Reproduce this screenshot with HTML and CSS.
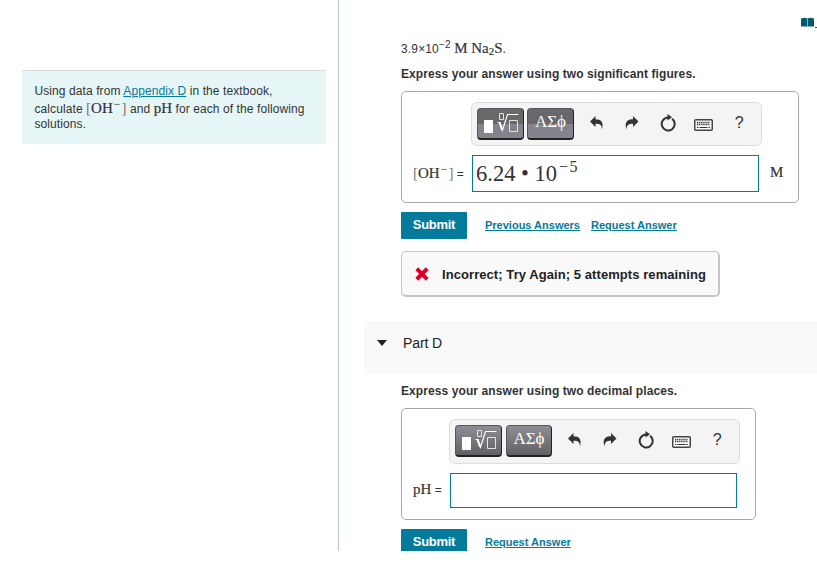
FILE: index.html
```
<!DOCTYPE html>
<html lang="en">
<head>
  <meta charset="UTF-8">
  <title>Part D</title>
  <link rel="stylesheet" href="styles.css">
</head>
<body>
  <!-- shared icons -->
  <svg class="defs">
    <symbol id="template" viewBox="0 0 47 32">
      <path d="M7 12h9v13H7z" fill="#fff"/>
      <path d="M22.500 5.500h4v6h-4zM32.500 12.500h8v11h-8z" fill="none" stroke="#e4e4e6"/>
      <path d="M20.500 14.500h2.500l2.500 7.500 5-15.500h11" fill="none" stroke="#fff" stroke-width="1.200"/>
      <path d="M22.500 14.500l2.500 7.500" stroke="#fff" stroke-width="1.800"/>
    </symbol>
    <symbol id="undo" viewBox="0 0 14 14">
      <path d="M0 5.500L5.500 0v3.200C11 3.200 14 6 12 13.500C12 9 10 7.800 5.500 7.800V11z"/>
    </symbol>
    <symbol id="redo" viewBox="0 0 14 14">
      <path d="M13.500 5.500L8 0v3.200C2.500 3.200-1 6 1.500 13.500C1.500 9 3.500 7.800 8 7.800V11z"/>
    </symbol>
    <symbol id="reset" viewBox="0 0 16 18">
      <path d="M12 4.700A6.500 6.500 0 1 1 8 3.500" fill="none" stroke="#333" stroke-width="2"/>
      <path d="M7.500 0l4.500 3.200L7.500 6.500z"/>
    </symbol>
    <symbol id="keyboard" viewBox="0 0 19 12">
      <rect x=".75" y=".75" width="17.500" height="10.500" rx="1" fill="#fff" stroke="#444" stroke-width="1.500"/>
      <path d="M3 3.500h13M3 5.500h13" fill="none" stroke="#333" stroke-width="1.300" stroke-dasharray="1.300 .8"/>
      <path d="M3 8.500h1.500M5.500 8.500h8M14.500 8.500H16" stroke="#333" stroke-width="1.200"/>
    </symbol>
  </svg>

  <div class="page">
    <div class="sidebar">
      <div class="intro">
        <div class="line l1">Using data from <a href="#">Appendix D</a> in the textbook,</div>
        <div class="line l2">calculate <span class="math"><span class="br">[</span>OH<sup>−</sup><span class="br">]</span></span> and <span class="math">pH</span> for each of the following</div>
        <div class="line">solutions.</div>
      </div>
    </div>

    <div class="main">
      <svg class="book" viewBox="0 0 16 11">
        <path d="M0 1.500C3 .5 5 .5 6 1.500V9.500H0zM7 1.500C8 .5 10 .5 13 1.500V9.500H7z"/>
        <path d="M6 1h1v9H6z" fill="#7fb4c2"/>
        <path d="M14 10h2v1h-2z"/>
      </svg>

      <div class="part">
        <div class="question">3.9×10<sup>−2</sup> <span class="math">M Na<sub>2</sub>S</span>.</div>
        <div class="instruction first">Express your answer using two significant figures.</div>

        <div class="answer answer-c">
          <div class="toolbar">
            <button class="tool split"><svg><use href="#template"/></svg></button>
            <button class="tool greek split">ΑΣϕ</button>
            <div class="icons">
              <span><svg width="14" height="14"><use href="#undo"/></svg></span>
              <span><svg width="14" height="14"><use href="#redo"/></svg></span>
              <span><svg width="16" height="18"><use href="#reset"/></svg></span>
              <span class="kb"><svg width="19" height="12"><use href="#keyboard"/></svg></span>
              <span class="help">?</span>
            </div>
          </div>
          <div class="row">
            <div class="label"><span class="math"><span class="br">[</span>OH<sup>−</sup><span class="br">]</span></span> =</div>
            <div class="field">6.24 • 10<sup>−5</sup></div>
            <div class="unit">M</div>
          </div>
        </div>

        <div class="actions">
          <button class="submit">Submit</button>
          <a class="prev" href="#">Previous Answers</a>
          <a href="#">Request Answer</a>
        </div>

        <div class="feedback">
          <svg width="14" height="14" viewBox="0 0 14 14"><path d="M3.200 3.200l7.600 7.600M10.800 3.200l-7.600 7.600" stroke="#e00025" stroke-width="4" stroke-linecap="square"/></svg>
          <span>Incorrect; Try Again; 5 attempts remaining</span>
        </div>
      </div>

      <div class="part-header"><i class="arrow"></i><span>Part D</span></div>

      <div class="part">
        <div class="instruction second">Express your answer using two decimal places.</div>

        <div class="answer answer-d">
          <div class="toolbar">
            <button class="tool"><svg><use href="#template"/></svg></button>
            <button class="tool greek">ΑΣϕ</button>
            <div class="icons">
              <span><svg width="14" height="14"><use href="#undo"/></svg></span>
              <span><svg width="14" height="14"><use href="#redo"/></svg></span>
              <span><svg width="16" height="18"><use href="#reset"/></svg></span>
              <span class="kb"><svg width="19" height="12"><use href="#keyboard"/></svg></span>
              <span class="help">?</span>
            </div>
          </div>
          <div class="row">
            <div class="label"><span class="math">pH</span> =</div>
            <div class="field"></div>
          </div>
        </div>

        <div class="actions">
          <button class="submit">Submit</button>
          <a href="#">Request Answer</a>
        </div>
      </div>
    </div>
  </div>
</body>
</html>
```
FILE: styles.css
```
* {
  box-sizing: border-box;
}
body {
  margin: 0;
  background: #fff;
  color: #333;
  font-family: "Liberation Sans", Arial, sans-serif;
  font-size: 12px;
}
svg {
  display: block;
  fill: #333;
}
.defs {
  display: none;
}
a {
  color: #047a9c;
}
sup, sub {
  line-height: 0;
}
.page {
  display: flex;
  height: 551px;
  overflow: hidden;
}

/* left column */
.sidebar {
  width: 339px;
  padding: 70px 12px 0 22px;
  border-right: 1px solid #b9c7d6;
}
.intro {
  height: 74px;
  padding: 12px 0 0 12.5px;
  border-top: 1px solid #d9dcdc;
  background: #e6f6f7;
}
.line {
  height: 16.5px;
  line-height: 16px;
  white-space: nowrap;
  letter-spacing: 0.09px;
}
.math {
  font-family: "Liberation Serif", "Times New Roman", serif;
  font-size: 15px;
  letter-spacing: 0;
  -webkit-text-stroke: 0.2px;
}
.math sup {
  margin: 0 1px;
  font-size: 12px;
  vertical-align: 5px;
  -webkit-text-stroke: 0;
}
.br {
  color: #777;
  -webkit-text-stroke: 0;
}

/* right column */
.main {
  flex: 1;
  padding-top: 17px;
}
.book {
  width: 16px;
  height: 11px;
  margin-left: 462px;
  fill: #005a70;
}
.part {
  padding-left: 62px;
}
.question {
  height: 40px;
  padding-top: 11px;
  line-height: 18px;
  white-space: nowrap;
  letter-spacing: 0.15px;
}
.question sup {
  font-size: 10px;
  vertical-align: 5px;
}
.question sub {
  font-size: 11px;
  vertical-align: -2px;
}
.instruction {
  height: 23px;
  line-height: 12px;
  font-weight: bold;
  letter-spacing: 0.09px;
  white-space: nowrap;
}
.second {
  padding-top: 11px;
  height: 34px;
}
.answer {
  height: 112px;
  padding-top: 10px;
  border: 1px solid #a6a8ab;
  border-radius: 5px;
}
.answer-c {
  width: 398px;
}
.answer-d {
  width: 355px;
}
.toolbar {
  display: flex;
  gap: 3px;
  width: 291px;
  height: 44px;
  margin-left: 69px;
  padding: 5px 0 5px 5px;
  border: 1px solid #dcdcdc;
  border-radius: 6px;
  background: #f4f4f4;
}
.answer-d .toolbar {
  height: 45px;
  margin-left: 47px;
}
.tool {
  width: 47px;
  height: 32px;
  padding: 0;
  border: 1px solid #55555a;
  border-right-color: #222;
  border-bottom: 2px solid #222;
  border-radius: 4px;
  background: linear-gradient(#8e8d94, #626265);
  color: #fff;
}
.tool.split {
  background: linear-gradient(#68686b 50%, #85848c 50%);
}
.tool svg {
  width: 47px;
  height: 32px;
  margin: -1px;
}
.greek {
  padding-bottom: 3px;
  font-family: "Liberation Serif", "Times New Roman", serif;
  font-size: 17px;
  line-height: 20px;
}
.answer-d .greek {
  width: 46px;
  margin-left: 1px;
}
.icons {
  display: flex;
  margin-left: 2px;
}
.icons span {
  display: flex;
  justify-content: center;
  align-items: center;
  width: 35.6px;
  height: 30px;
}
.icons .kb {
  padding-top: 4px;
}
.icons .help {
  font-size: 16px;
}
.row {
  display: flex;
  align-items: center;
  margin-top: 9px;
}
.label {
  width: 70px;
  padding-left: 11px;
  white-space: nowrap;
}
.answer-d .label {
  width: 48px;
  padding-bottom: 2px;
}
.field {
  width: 287px;
  height: 37px;
  padding-left: 3px;
  border: 1px solid #047a9c;
  font-family: "Liberation Serif", "Times New Roman", serif;
  font-size: 22.5px;
  line-height: 36px;
  white-space: nowrap;
}
.answer-d .field {
  height: 35px;
}
.field sup {
  margin-left: 2px;
  font-size: 16px;
  letter-spacing: 1.5px;
  vertical-align: 9px;
}
.unit {
  margin-left: 11px;
  padding-bottom: 3px;
  font-family: "Liberation Serif", "Times New Roman", serif;
  font-size: 15px;
  -webkit-text-stroke: 0.2px;
}
.actions {
  display: flex;
  margin-top: 9px;
  font-size: 11px;
  font-weight: bold;
  line-height: 27px;
}
.submit {
  width: 66px;
  height: 27px;
  margin-right: 18px;
  padding: 0 0 2px;
  border: 0;
  border-radius: 1px;
  background: #047a9c;
  color: #fff;
  font: bold 13px "Liberation Sans", Arial, sans-serif;
  letter-spacing: -0.3px;
}
.prev {
  margin-right: 11px;
}
.feedback {
  display: flex;
  align-items: center;
  width: 319px;
  height: 46px;
  margin-top: 12px;
  padding-left: 13px;
  border: 1px solid #c6c6c6;
  border-right-width: 2px;
  border-bottom-width: 2px;
  border-radius: 5px;
  background: #f9f9f9;
  color: #222;
  font-size: 13px;
  font-weight: bold;
  letter-spacing: 0.07px;
}
.feedback span {
  margin-left: 13px;
  padding-top: 1px;
  white-space: nowrap;
}
.part-header {
  display: flex;
  align-items: center;
  height: 53px;
  margin: 24px 0 0 25px;
  padding: 0 0 9px 13px;
  background: #f9f9f9;
  color: #222;
  font-size: 14px;
  letter-spacing: -0.1px;
}
.arrow {
  width: 10px;
  margin-right: 16px;
  border: 5px solid transparent;
  border-top: 6px solid #222;
  border-bottom: 0;
}
```
